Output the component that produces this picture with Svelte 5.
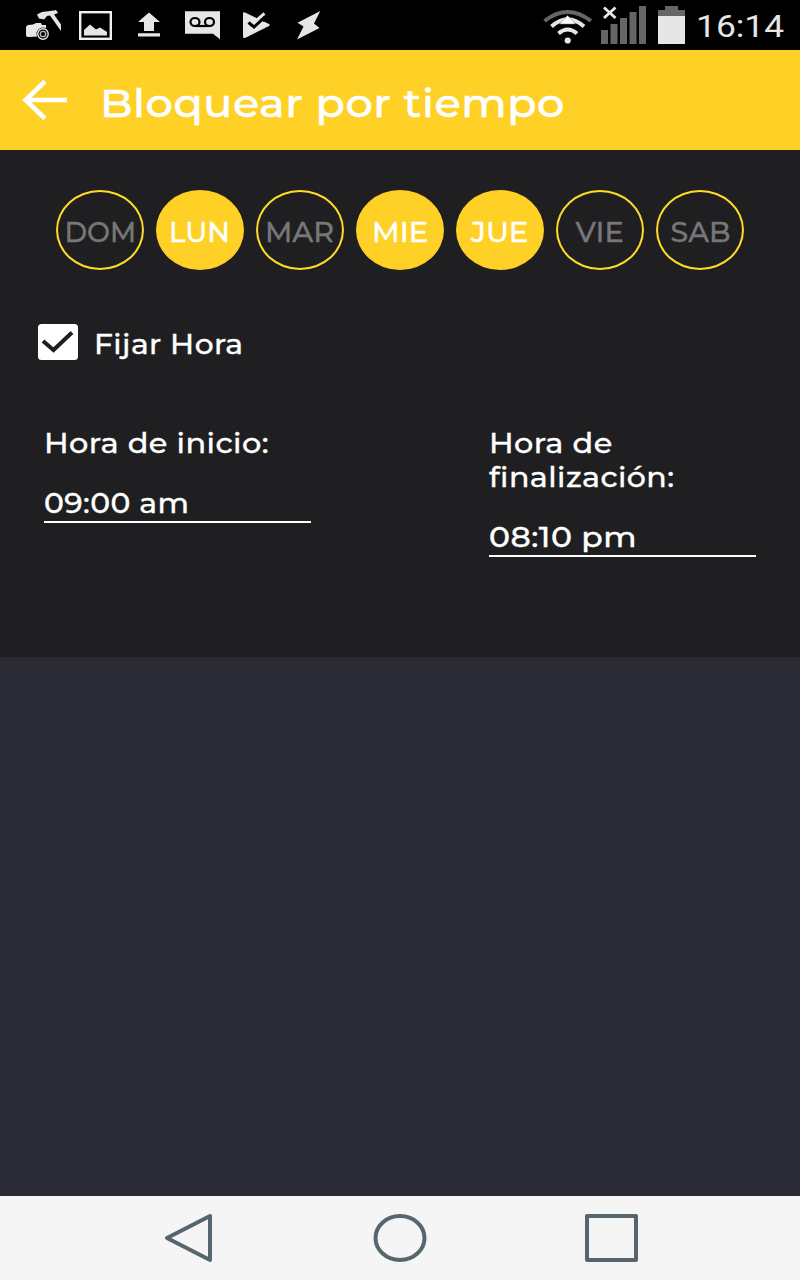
<script>
  let days = $state([
    { name: 'DOM', width: 72, active: false },
    { name: 'LUN', width: 61, active: true },
    { name: 'MAR', width: 69, active: false },
    { name: 'MIE', width: 56, active: true },
    { name: 'JUE', width: 57, active: true },
    { name: 'VIE', width: 48, active: false },
    { name: 'SAB', width: 60, active: false }
  ]);

  let fixedTime = $state(true);

  const fields = [
    { lines: [['Hora de inicio:', 225]], value: '09:00 am', width: 145.5 },
    { lines: [['Hora de', 123.5], ['finalización:', 186]], value: '08:10 pm', width: 148 }
  ];

  // Widen a run of text horizontally to the given width
  function stretch(node, width) {
    node.style.transform = `scaleX(${width / node.offsetWidth})`;
  }
</script>

<div class="screen">
  <div class="status">
    <div class="notifications">
      <!-- camera and hammer -->
      <svg width="70" height="50" viewBox="0 0 70 50">
        <path d="M26 27.500q0-2 2-2.500l5-.5 3-1.500h5l1 2h4v11l-17 1q-3 0-3-2z" fill="#e6e6e6" />
        <circle cx="43" cy="34" r="6.500" fill="#000" />
        <circle cx="43" cy="34" r="5.200" fill="none" stroke="#e6e6e6" stroke-width="1.400" />
        <circle cx="43" cy="34" r="2.700" fill="none" stroke="#bbb" stroke-width="1.300" />
        <path d="M37 14.500l5-2.500 12-1.500 2-.5 2 3-4 1.500 7 10v6.500L50 15.500l-3 .5-3 3.500-5-1z" fill="#e6e6e6" />
      </svg>
      <!-- picture -->
      <svg width="54" height="50" viewBox="70 0 54 50">
        <rect x="80.200" y="12.200" width="30.600" height="26.600" fill="none" stroke="#f0f0f0" stroke-width="2.400" />
        <path d="M84 35.500v-5.500l6-5.500 6 5 4-2 7 4.500v3.500z" fill="#e6e6e6" />
      </svg>
      <!-- upload -->
      <svg width="51" height="50" viewBox="124 0 51 50">
        <path d="M149 12.500l11 9.500h-6v9h-10v-9h-6zM138 33.200h22v3.300h-22z" fill="#e6e6e6" />
      </svg>
      <!-- voicemail -->
      <svg width="55" height="50" viewBox="175 0 55 50">
        <path d="M185 11.300h35v28l-7-5.500h-28z" fill="#e6e6e6" />
        <g fill="none" stroke="#000" stroke-width="2.200">
          <ellipse cx="195" cy="22" rx="4.500" ry="4" />
          <ellipse cx="209.500" cy="22" rx="4.500" ry="4" />
          <path d="M195 26h14.500" />
        </g>
      </svg>
      <!-- play with check -->
      <svg width="53" height="50" viewBox="230 0 53 50">
        <path d="M243 13.500q0-2 2-1l24 11.500q1.500 1 0 2L246 37.500q-3 1.500-3-1z" fill="#e6e6e6" />
        <path d="M256 17l6-6 7 5-5 6z" fill="#000" />
        <path d="M254 22.500l10.500-9" fill="none" stroke="#e6e6e6" stroke-width="3" />
        <path d="M248.500 22.500l5.500 4.500 11.500-10.500" fill="none" stroke="#000" stroke-width="3" />
      </svg>
      <!-- bolt -->
      <svg width="50" height="50" viewBox="283 0 50 50">
        <path d="M320.300 11l-6.300 12.500 5.500 4.500-22.500 11.500 6.500-13-6-3.700z" fill="#e6e6e6" />
      </svg>
    </div>
    <div class="system">
      <!-- wifi -->
      <svg width="60" height="50" viewBox="540 0 60 50">
        <g fill="none">
          <path d="M544.500 21Q567.500 3 591 21" stroke="#666" stroke-width="4" />
          <path d="M551.500 26.500Q567.500 12 584 26.500" stroke="#e6e6e6" stroke-width="4" />
          <path d="M558.500 33.500Q567.500 25.500 577 33.500" stroke="#e6e6e6" stroke-width="4" />
        </g>
        <path d="M567.500 15.500l8 8.500h-16z" fill="#fff" stroke="#777" stroke-width=".5" />
        <circle cx="567.700" cy="40.500" r="3.100" fill="#e6e6e6" />
      </svg>
      <!-- signal, no service -->
      <svg width="52" height="50" viewBox="600 0 52 50">
        <path d="M601 30h7v14h-7zM610.500 24h7v20h-7zM620 18h7v26h-7zM629.500 12h7v32h-7zM639 6h7v38h-7z" fill="#666" />
        <path d="M604 7.500l11.500 10.500M615.500 7.500L604 18" stroke="#e6e6e6" stroke-width="2.800" />
      </svg>
      <!-- battery -->
      <svg width="44" height="50" viewBox="652 0 44 50">
        <path d="M665 6h13v4h7v6h-27v-6h7z" fill="#666" />
        <path d="M658 16h27v28h-27z" fill="#e6e6e6" />
      </svg>
      <span class="clock" use:stretch={88.5}>16:14</span>
    </div>
  </div>

  <header>
    <svg class="back" width="46" height="42" viewBox="0 0 46 42">
      <path d="M23 2.500L3.500 21 23 39.500M3.500 21H45" fill="none" stroke="#fff" stroke-width="4.600" />
    </svg>
    <h1 use:stretch={464.5}>Bloquear por tiempo</h1>
  </header>

  <main>
    <div class="days">
      {#each days as day}
        <button class="day" class:active={day.active} onclick={() => (day.active = !day.active)}>
          <span use:stretch={day.width}>{day.name}</span>
        </button>
      {/each}
    </div>

    <label class="fix">
      <input type="checkbox" bind:checked={fixedTime} />
      <svg width="40" height="36" viewBox="0 0 40 36">
        <rect width="40" height="36" rx="3.500" fill="#fff" />
        {#if fixedTime}
          <path d="M5 17l10.500 9L34 8.500" fill="none" stroke="#1f1f21" stroke-width="4" />
        {/if}
      </svg>
      <span class="text" use:stretch={149.5}>Fijar Hora</span>
    </label>

    <div class="times">
      {#each fields as field}
        <div class="field">
          <div class="caption">
            {#each field.lines as [line, width]}
              <span class="text" use:stretch={width}>{line}</span>
            {/each}
          </div>
          <div class="value">
            <span class="text" use:stretch={field.width}>{field.value}</span>
          </div>
        </div>
      {/each}
    </div>
  </main>

  <nav>
    <svg width="56" height="56" viewBox="0 0 56 56">
      <path d="M50 6v44L7 28z" />
    </svg>
    <svg width="56" height="56" viewBox="0 0 56 56">
      <ellipse cx="28" cy="28" rx="24.500" ry="22" />
    </svg>
    <svg width="56" height="56" viewBox="0 0 56 56">
      <path d="M3 6h49v44H3z" />
    </svg>
  </nav>
</div>

<style>
  :global(body) {
    margin: 0;
  }
  .screen {
    width: 800px;
    height: 1280px;
    display: flex;
    flex-direction: column;
    overflow: hidden;
    background: #2b2b35;
    color: #fff;
    font-family: Montserrat, Inter, sans-serif;
    font-weight: 500;
  }
  svg {
    display: block;
    flex: none;
  }
  .status {
    height: 50px;
    display: flex;
    justify-content: space-between;
    background: #000;
  }
  .notifications {
    display: flex;
  }
  .system {
    display: flex;
    width: 260px;
  }
  .clock {
    align-self: flex-start;
    padding-top: 7px;
    font: 400 32px/38px Roboto, sans-serif;
    color: #e6e6e6;
    transform-origin: left;
  }
  header {
    height: 100px;
    display: flex;
    align-items: center;
    gap: 32px;
    padding-left: 22px;
    background: #ffd026;
  }
  h1 {
    margin: 0;
    padding-top: 6px;
    font-size: 39.5px;
    font-weight: 500;
    line-height: 48px;
    letter-spacing: 0.5px;
    -webkit-text-stroke: 0.5px;
    white-space: nowrap;
    transform-origin: left;
  }
  main {
    height: 507px;
    box-sizing: border-box;
    padding-top: 40px;
    background: #1f1f21;
  }
  .days {
    display: flex;
    justify-content: center;
    gap: 12px;
  }
  .day {
    width: 88px;
    height: 80px;
    box-sizing: border-box;
    display: flex;
    flex: none;
    align-items: center;
    justify-content: center;
    padding: 5px 0 0;
    border: 2px solid #ffdb28;
    border-radius: 50%;
    background: none;
    color: #777;
    font: inherit;
    font-size: 27px;
    line-height: 34px;
    -webkit-text-stroke: 0.3px;
  }
  .day.active {
    background: #ffd026;
    border-color: #ffd026;
    color: #fff;
  }
  .fix {
    display: flex;
    align-items: center;
    gap: 15.5px;
    margin: 54px 0 0 38px;
    height: 36px;
  }
  .fix input {
    display: none;
  }
  .fix .text {
    padding-top: 5px;
  }
  .text {
    display: block;
    width: max-content;
    font-size: 27px;
    line-height: 34px;
    letter-spacing: 0.4px;
    -webkit-text-stroke: 0.3px;
    white-space: nowrap;
    transform-origin: left;
  }
  .times {
    display: flex;
    justify-content: space-between;
    align-items: flex-start;
    margin: 67px 44px 0 44px;
  }
  .field {
    width: 267px;
  }
  .value {
    margin-top: 26px;
    border-bottom: 2px solid #fff;
  }
  .value .text {
    font-kerning: none;
  }
  nav {
    height: 84px;
    margin-top: auto;
    display: flex;
    justify-content: center;
    align-items: center;
    gap: 156px;
    background: #f5f5f5;
  }
  nav svg {
    fill: none;
    stroke: #56656e;
    stroke-width: 4;
    stroke-linejoin: round;
  }
</style>
